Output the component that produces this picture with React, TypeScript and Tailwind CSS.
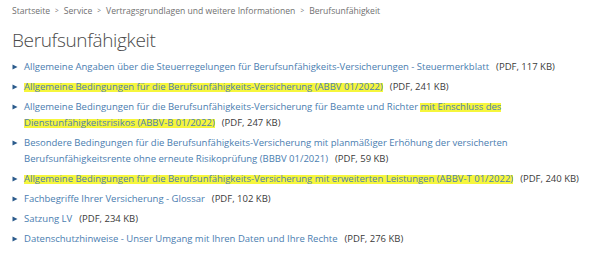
const font = { fontFamily: '"Open Sans", "Noto Sans", sans-serif' };

type Part = { t: string; hl?: boolean };
type Doc = { parts: Part[]; size: string };

const docs: Doc[] = [
  {
    parts: [{ t: "Allgemeine Angaben über die Steuerregelungen für Berufsunfähigkeits-Versicherungen - Steuermerkblatt" }],
    size: "(PDF, 117 KB)",
  },
  {
    parts: [{ t: "Allgemeine Bedingungen für die Berufsunfähigkeits-Versicherung (ABBV 01/2022)", hl: true }],
    size: "(PDF, 241 KB)",
  },
  {
    parts: [
      { t: "Allgemeine Bedingungen für die Berufsunfähigkeits-Versicherung für Beamte und Richter " },
      { t: "mit Einschluss des Dienstunfähigkeitsrisikos (ABBV-B 01/2022)", hl: true },
    ],
    size: "(PDF, 247 KB)",
  },
  {
    parts: [
      {
        t: "Besondere Bedingungen für die Berufsunfähigkeits-Versicherung mit planmäßiger Erhöhung der versicherten Berufsunfähigkeitsrente ohne erneute Risikoprüfung (BBBV 01/2021)",
      },
    ],
    size: "(PDF, 59 KB)",
  },
  {
    parts: [
      { t: "Allgemeine Bedingungen für die Berufsunfähigkeits-Versicherung mit erweiterten Leistungen (ABBV-T 01/2022)", hl: true },
    ],
    size: "(PDF, 240 KB)",
  },
  { parts: [{ t: "Fachbegriffe Ihrer Versicherung - Glossar" }], size: "(PDF, 102 KB)" },
  { parts: [{ t: "Satzung LV" }], size: "(PDF, 234 KB)" },
  {
    parts: [{ t: "Datenschutzhinweise - Unser Umgang mit Ihren Daten und Ihre Rechte" }],
    size: "(PDF, 276 KB)",
  },
];

function Crumb({ label, last }: { label: string; last?: boolean }) {
  return (
    <>
      <span>{label}</span>
      {!last && <span className="mx-[5px] text-[6.5px]">&gt;</span>}
    </>
  );
}

export default function App() {
  return (
    <div className="w-[602px] h-[265px] bg-white overflow-hidden pl-[12px] pt-[4px]" style={font}>
      <nav className="flex items-center text-[8.6px] leading-[14px] text-[#707070]">
        <Crumb label="Startseite" />
        <Crumb label="Service" />
        <Crumb label="Vertragsgrundlagen und weitere Informationen" />
        <Crumb label="Berufsunfähigkeit" last />
      </nav>

      <h1 className="mt-[9px] text-[19px] leading-[26px] tracking-[-0.35px] font-light text-[#4a4a4a]">
        Berufsunfähigkeit
      </h1>

      <ul className="mt-[6px] flex flex-col gap-[4px] w-[578px]">
        {docs.map((d, i) => (
          <li key={i} className="flex items-start text-[9.5px] leading-[16px]">
            <svg width="6" height="6" viewBox="0 0 6 6" className="mt-[5px] mr-[6px] shrink-0">
              <path d="M0.5 0.5 L5.5 3 L0.5 5.5 Z" fill="#2b5b8c" />
            </svg>
            <span>
              {d.parts.map((p, j) => (
                <span
                  key={j}
                  className={
                    p.hl
                      ? "text-[#4e7fae] bg-[linear-gradient(transparent_22%,#f6f63c_22%,#f6f63c_92%,transparent_92%)] [box-decoration-break:clone]"
                      : "text-[#4a7db0]"
                  }
                >
                  {p.t}
                </span>
              ))}
              <span className="ml-[7px] text-[#3b3b3b]">{d.size}</span>
            </span>
          </li>
        ))}
      </ul>
    </div>
  );
}
